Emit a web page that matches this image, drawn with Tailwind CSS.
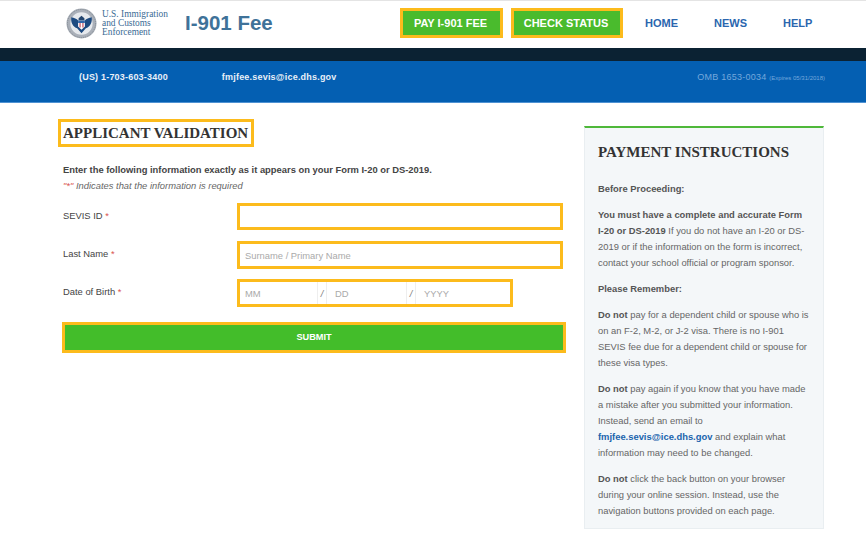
<!DOCTYPE html>
<html><head><meta charset="utf-8"><script src="https://cdn.jsdelivr.net/npm/@tailwindcss/browser@4"></script></head>
<body class="bg-white font-['Liberation_Sans',Arial,sans-serif] text-[#555] w-[866px] h-[534px] overflow-hidden">
<header class="h-[48px] flex items-center border-t border-[#e4e4e4] pb-[3px] pl-[66px]">
  <svg class="w-[31px] h-[31px] shrink-0" viewBox="0 0 32 32">
    <circle cx="16" cy="16" r="15.500" fill="#aab0b9"/><circle cx="16" cy="16" r="14.500" fill="none" stroke="#7f8790" stroke-dasharray="1 1"/>
    <circle cx="16" cy="16" r="11.500" fill="#e6e9ed"/>
    <path d="M5.500 9.500c3 .5 5.500 1.500 7 3.500h7c1.500-2 4-3 7-3.500 1 5.500-2 10-6 11.500l-4.500 5-4.500-5c-4-1.500-7-6-6-11.500z" fill="#1d4a80"/>
    <path d="M13 10.500l3-2.500 3 2.500v3h-6z" fill="#24466f"/>
    <path d="M12.500 13h7v6l-3.500 3.500-3.500-3.500z" fill="#fff"/><path d="M12.500 13h7v2.500h-7z" fill="#3267a8"/>
    <path d="M14 15.500h1v4.500h-1zM17 15.500h1v4.500h-1z" fill="#b6273a"/>
  </svg>
  <div class="ml-[5px] w-[81px] font-['Liberation_Serif',serif] text-[9.400px] leading-[9px] text-[#3b6b94]">U.S. Immigration<br>and Customs<br>Enforcement</div>
  <h1 class="ml-[2px] text-[20.500px] font-bold text-[#3f7299] leading-none">I-901 Fee</h1>
  <nav class="ml-auto flex items-center text-[11px] font-bold">
    <a class="h-[30px] w-[103px] pr-[2px] flex items-center justify-center bg-[#4abb2d] border-[3px] border-[#fcbb1c] text-white">PAY I-901 FEE</a>
    <a class="ml-[8px] h-[30px] w-[112px] pr-[2px] flex items-center justify-center bg-[#4abb2d] border-[3px] border-[#fcbb1c] text-white">CHECK STATUS</a>
    <a class="ml-[22px] w-[33px] text-[#2a66ae]">HOME</a>
    <a class="ml-[36px] w-[33px] text-[#2a66ae]">NEWS</a>
    <a class="ml-[36px] w-[29px] mr-[54px] text-[#2a66ae]">HELP</a>
  </nav>
</header>
<div class="h-[13px] bg-[#0b2233]"></div>
<div class="h-[42px] bg-[#045fb2] border-b border-[#4f92d3] flex items-start pt-[10px] pl-[79px] pr-[41px] text-[#e8f0f8] text-[9px] leading-[12px] font-bold">
  <span class="tracking-[0.2px]">(US) 1-703-603-3400</span>
  <span class="ml-[54px] tracking-[0.2px]">fmjfee.sevis@ice.dhs.gov</span>
  <span class="ml-auto font-normal text-[#74a8dc] tracking-[0.25px]">OMB 1653-0034 <span class="text-[6px] tracking-normal">(Expires 05/31/2018)</span></span>
</div>
<main class="flex items-start pt-[16px] pl-[58px]">
  <section class="w-[508px]">
    <h2 class="inline-block w-[196px] border-[3px] border-[#fcbb1c] px-[2px] h-[28px] leading-[23px] whitespace-nowrap font-['Liberation_Serif',serif] font-bold text-[15px] text-[#333]">APPLICANT VALIDATION</h2>
    <div class="pl-[5px]">
      <p class="mt-[16px] text-[9.400px] leading-[14px] font-bold text-[#444]">Enter the following information exactly as it appears on your Form I-20 or DS-2019.</p>
      <p class="mt-[2px] text-[9.400px] leading-[14px] italic text-[#666]"><span class="text-[#d9534f]">"*"</span> Indicates that the information is required</p>
      <div class="mt-[10px] flex items-center h-[27px]">
        <label class="w-[174px] text-[9.400px] text-[#444]">SEVIS ID <span class="text-[#d9534f]">*</span></label>
        <input class="w-[326px] h-[27px] border-[3px] border-[#fcbb1c] bg-white">
      </div>
      <div class="mt-[11px] flex items-center h-[28px]">
        <label class="w-[174px] pb-[1px] text-[9.400px] text-[#444]">Last Name <span class="text-[#d9534f]">*</span></label>
        <input class="w-[326px] h-[28px] border-[3px] border-[#fcbb1c] bg-white px-[5px] text-[9.400px] placeholder:text-[#aaa]" placeholder="Surname / Primary Name">
      </div>
      <div class="mt-[10px] flex items-center h-[28px]">
        <label class="w-[174px] pb-[1px] text-[9.400px] text-[#444]">Date of Birth <span class="text-[#d9534f]">*</span></label>
        <div class="w-[276px] h-[28px] border-[3px] border-[#fcbb1c] flex text-[9.400px] text-[#aaa] leading-[23px]">
          <span class="w-[77px] pl-[5px]">MM</span>
          <span class="w-[10px] border-x border-[#eee] text-center text-[#777] italic">/</span>
          <span class="w-[79px] pl-[8px]">DD</span>
          <span class="w-[10px] border-x border-[#eee] text-center text-[#777] italic">/</span>
          <span class="pl-[8px]">YYYY</span>
        </div>
      </div>
    </div>
    <button class="mt-[15px] ml-[4px] block w-[504px] h-[31px] bg-[#43bd2a] border-[3px] border-[#fcbb1c] text-white text-[9.200px] font-bold">SUBMIT</button>
  </section>
  <aside class="mt-[7px] ml-[18px] w-[240px] h-[403px] bg-[#f4f7f9] border border-[#e9eef1] border-t-2 border-t-[#4fb83a] px-[13px] text-[9.400px] leading-[16px] text-[#666]">
    <h3 class="mt-[14px] font-['Liberation_Serif',serif] font-bold text-[15px] leading-[20px] text-[#333]">PAYMENT INSTRUCTIONS</h3>
    <p class="mt-[19px] font-bold text-[#555]">Before Proceeding:</p>
    <p class="mt-[10px]"><b class="text-[#555]">You must have a complete and accurate Form I-20 or DS-2019</b> If you do not have an I-20 or DS-2019 or if the information on the form is incorrect, contact your school official or program sponsor.</p>
    <p class="mt-[10px] font-bold text-[#555]">Please Remember:</p>
    <p class="mt-[10px]"><b class="text-[#555]">Do not</b> pay for a dependent child or spouse who is on an F-2, M-2, or J-2 visa. There is no I-901 SEVIS fee due for a dependent child or spouse for these visa types.</p>
    <p class="mt-[10px]"><b class="text-[#555]">Do not</b> pay again if you know that you have made a mistake after you submitted your information. Instead, send an email to<br><b class="text-[#1a64ad]">fmjfee.sevis@ice.dhs.gov</b> and explain what information may need to be changed.</p>
    <p class="mt-[10px]"><b class="text-[#555]">Do not</b> click the back button on your browser during your online session. Instead, use the navigation buttons provided on each page.</p>
  </aside>
</main>
</body></html>
